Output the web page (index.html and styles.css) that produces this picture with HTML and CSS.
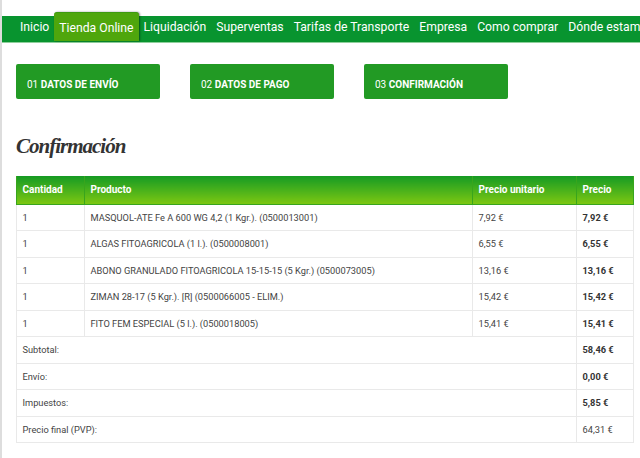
FILE: index.html
```html
<!DOCTYPE html>
<html lang="es">
<head>
<meta charset="utf-8">
<title>Confirmación</title>
<link rel="stylesheet" href="styles.css">
</head>
<body>
<div class="page">
  <nav class="nav">
    <a class="nav-item">Inicio</a>
    <a class="nav-item active">Tienda Online</a>
    <a class="nav-item">Liquidación</a>
    <a class="nav-item">Superventas</a>
    <a class="nav-item">Tarifas de Transporte</a>
    <a class="nav-item">Empresa</a>
    <a class="nav-item">Como comprar</a>
    <a class="nav-item">Dónde estamos</a>
  </nav>
  <div class="steps">
    <div class="step"><span>01</span> <b>DATOS DE ENVÍO</b></div>
    <div class="step"><span>02</span> <b>DATOS DE PAGO</b></div>
    <div class="step"><span>03</span> <b>CONFIRMACIÓN</b></div>
  </div>
  <h1 class="title">Confirmación</h1>
  <table class="cart">
    <colgroup>
      <col class="c1"><col class="c2"><col class="c3"><col class="c4">
    </colgroup>
    <thead>
      <tr><th>Cantidad</th><th>Producto</th><th>Precio unitario</th><th>Precio</th></tr>
    </thead>
    <tbody>
      <tr><td>1</td><td>MASQUOL-ATE Fe A 600 WG 4,2 (1 Kgr.). (0500013001)</td><td>7,92 €</td><td><b>7,92 €</b></td></tr>
      <tr><td>1</td><td>ALGAS FITOAGRICOLA (1 l.). (0500008001)</td><td>6,55 €</td><td><b>6,55 €</b></td></tr>
      <tr><td>1</td><td>ABONO GRANULADO FITOAGRICOLA 15-15-15 (5 Kgr.) (0500073005)</td><td>13,16 €</td><td><b>13,16 €</b></td></tr>
      <tr><td>1</td><td>ZIMAN 28-17 (5 Kgr.). [R] (0500066005 - ELIM.)</td><td>15,42 €</td><td><b>15,42 €</b></td></tr>
      <tr><td>1</td><td>FITO FEM ESPECIAL (5 l.). (0500018005)</td><td>15,41 €</td><td><b>15,41 €</b></td></tr>
      <tr><td colspan="3">Subtotal:</td><td><b>58,46 €</b></td></tr>
      <tr><td colspan="3">Envío:</td><td><b>0,00 €</b></td></tr>
      <tr><td colspan="3">Impuestos:</td><td><b>5,85 €</b></td></tr>
      <tr><td colspan="3">Precio final (PVP):</td><td>64,31 €</td></tr>
    </tbody>
  </table>
</div>
</body>
</html>
```
FILE: styles.css
```css
* { box-sizing: border-box; }
html, body { margin: 0; padding: 0; background: #fff; }
body { width: 640px; height: 458px; overflow: hidden; font-family: Roboto, "Liberation Sans", sans-serif; }
.page { border-left: 2px solid #ddd; height: 458px; padding-top: 16px; overflow: hidden; }
.nav {
  display: flex;
  height: 27px;
  background: #08942f;
  border-bottom: 1px solid #8fcf9c;
  padding-left: 13px;
  white-space: nowrap;
  color: #fff;
  font-size: 12.2px;
  line-height: 22px;
}
.nav-item { padding: 0 5px; flex: none; }
.active {
  position: relative;
  margin-top: -4px;
  height: 29px;
  padding-top: 4px;
  background: #4fa60c;
  border-top: 1px solid #3d9a10;
  border-radius: 3px 3px 0 0;
  box-shadow: 1px 0 2px rgba(0,0,0,.45);
}
.steps { display: flex; gap: 30.5px; margin: 21px 0 0 14px; }
.step {
  width: 143.5px;
  height: 35px;
  background: #229a24;
  border-radius: 2px;
  color: #fff;
  font-size: 10px;
  line-height: 41px;
  padding-left: 11px;
}
.step b { font-weight: 700; }
.title {
  margin: 31px 0 0 14px;
  font: italic 700 21px/32px "Liberation Serif", serif;
  letter-spacing: -1px;
  color: #333;
}
.cart {
  margin: 14px 0 0 14px;
  width: 617px;
  border-collapse: collapse;
  table-layout: fixed;
  font-size: 9.25px;
  color: #444;
}
.c1 { width: 68px; }
.c2 { width: 388px; }
.c3 { width: 104px; }
.c4 { width: 57px; }
th {
  height: 28px;
  padding: 0 5.5px;
  text-align: left;
  color: #fff;
  font-size: 10px;
  font-weight: 700;
  background: linear-gradient(#159a24, #7cc712);
  border: 1px solid #38a51d;
  border-top: 0;
}
td {
  height: 26.5px;
  padding: 0 5.5px;
  border: 1px solid #e9e9e9;
}
td b { color: #333; }
```
